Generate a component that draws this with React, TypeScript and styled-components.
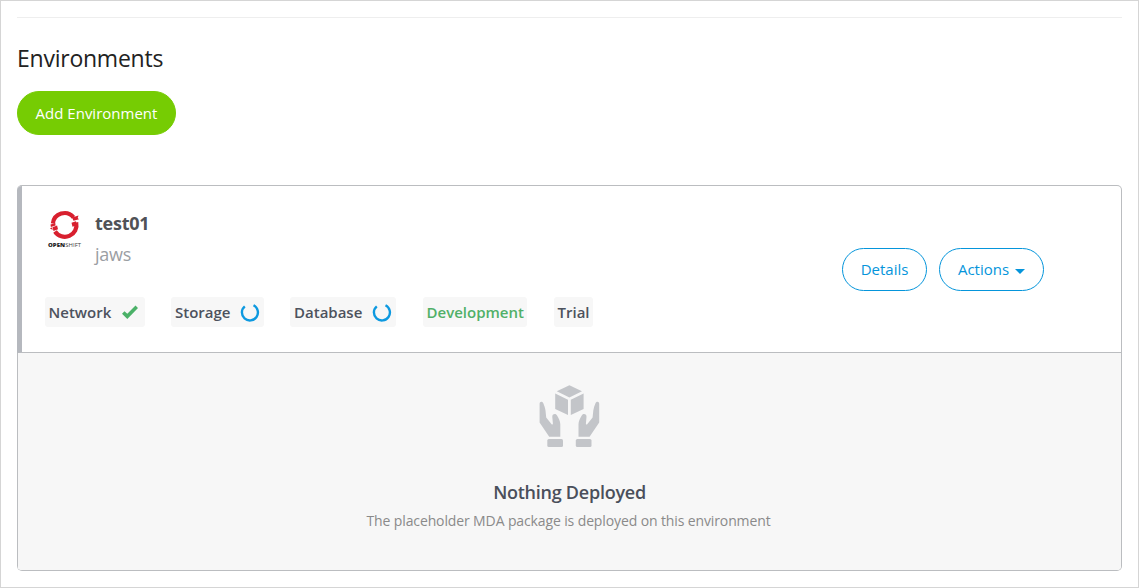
import React from "react";
import styled, { createGlobalStyle } from "styled-components";

const GlobalStyle = createGlobalStyle`
  *, *::before, *::after { box-sizing: border-box; }
  body {
    margin: 0;
    background: #fff;
    color: #555;
    font-family: "Open Sans", "Noto Sans", sans-serif;
    font-size: 15px;
  }
`;

const Page = styled.main`
  height: 588px;
  padding: 16px 16px 0;
  border: 1px solid #d5d5d5;
`;

const Rule = styled.hr`
  height: 1px;
  margin: 0;
  border: 0;
  background: #eee;
`;

const Heading = styled.h1`
  margin: 24px 0 17px;
  font-size: 23px;
  line-height: 32px;
  letter-spacing: -0.24px;
  font-weight: 400;
  color: #222;
`;

const Button = styled.button<{ $primary?: boolean; $width: number }>`
  display: flex;
  align-items: center;
  justify-content: center;
  width: ${(p) => p.$width}px;
  height: ${(p) => (p.$primary ? 44 : 43)}px;
  padding: 0 0 ${(p) => (p.$primary ? 0 : 1)}px;
  border: 1px solid ${(p) => (p.$primary ? "#76cc03" : "#0595db")};
  border-radius: 22px;
  background: ${(p) => (p.$primary ? "#76cc03" : "#fff")};
  color: ${(p) => (p.$primary ? "#fff" : "#0595db")};
  font: 400 15px/20px "Open Sans", sans-serif;
  white-space: nowrap;
`;

const Caret = styled.span`
  margin: 4px 0 0 6px;
  border: 5px solid transparent;
  border-top-color: currentColor;
  border-bottom: 0;
`;

const Card = styled.section`
  display: flex;
  flex-direction: column;
  height: 386px;
  margin-top: 50px;
  border: 1px solid #bbbdc0;
  border-left: 0;
  border-radius: 5px;
  overflow: hidden;
`;

const Summary = styled.div`
  display: flex;
  justify-content: space-between;
  height: 167px;
  border-left: 5px solid #b5b8be;
  border-bottom: 1px solid #bbbdc0;
`;

const Info = styled.div`
  padding: 23px 0 0 23px;
`;

const Identity = styled.div`
  display: flex;
  gap: 13px;
  padding-left: 2px;

  svg { margin-top: 1px; }
`;

const Name = styled.div`
  font-size: 18px;
  line-height: 28px;
  letter-spacing: -0.25px;
  font-weight: 700;
  color: #505257;
`;

const Owner = styled.div`
  margin-top: 3px;
  font-size: 18px;
  line-height: 28px;
  letter-spacing: -0.25px;
  color: #9b9ea3;
`;

const Tags = styled.div`
  display: flex;
  margin-top: 29px;
`;

const Tag = styled.span<{ $width: number; $gap?: number; $indent?: number; $green?: boolean }>`
  display: flex;
  align-items: center;
  width: ${(p) => p.$width}px;
  height: 30px;
  margin-right: ${(p) => p.$gap ?? 26}px;
  padding-left: ${(p) => p.$indent ?? 3.5}px;
  border-radius: 3px;
  background: #f7f7f7;
  color: ${(p) => (p.$green ? "#50b068" : "#4d525d")};
  font-size: 15px;
  line-height: 20px;
  font-weight: 600;
  white-space: nowrap;

  svg { margin-left: 9.5px; flex: none; }
`;

const Actions = styled.div`
  display: flex;
  gap: 12px;
  padding: 62px 77px 0 0;
`;

const Empty = styled.div`
  flex: 1;
  display: flex;
  flex-direction: column;
  align-items: center;
  padding: 32px 0 0;
  border-left: 1px solid #bbbdc0;
  background: #f7f7f7;
`;

const EmptyTitle = styled.h2`
  margin: 31px 0 0;
  font-size: 18px;
  line-height: 28px;
  letter-spacing: -0.25px;
  font-weight: 600;
  color: #4a4f5b;
`;

const EmptyText = styled.p`
  margin: 5px 2px 0 0;
  font-size: 14px;
  line-height: 20px;
  letter-spacing: -0.12px;
  color: #8a8a8a;
`;

const OpenShiftLogo = () => (
  <svg width="35" height="40" viewBox="0 0 35 40">
    <g fill="none" stroke="#d8202f" strokeWidth="4.200">
      <path d="M5.900 13.500A11.700 11.700 0 0 1 26.500 7.300" />
      <path d="M29.200 12.500A11.700 11.700 0 0 1 8 21.500" />
    </g>
    <path fill="#d8202f" d="M25 7.500l6.500-2-.8 2.400 1.300 1.300-5.500 1.600zM24.500 12.800l4.500-1.600 1 4-4.500 1.500zM3.500 14.500l4.700-1.500.4 2.600-4.700 1.500zM5.500 17.200l4.600-1.600.9 3.700-4.500 1.600zM2.800 18.200l2.200-.7.700 2.500z" />
    <text x="1" y="37" fontSize="5.500" fontFamily="Open Sans, sans-serif" fontWeight="800" fill="#222" textLength="17" lengthAdjust="spacingAndGlyphs">OPEN</text>
    <text x="18.300" y="37" fontSize="5.500" fontFamily="Open Sans, sans-serif" fill="#444" textLength="15.700" lengthAdjust="spacingAndGlyphs">SHIFT</text>
  </svg>
);

const Check = () => (
  <svg width="18" height="16" viewBox="0 0 18 16">
    <path d="M1 9.800L3.500 7.200 6.300 9.800 14.500 1.500 17 3.900 6.300 15z" fill="#4bb168" />
  </svg>
);

const Spinner = () => (
  <svg width="20" height="20" viewBox="0 0 20 20">
    <path d="M4.800 4.300A8 8 0 1 0 13.500 3.300" fill="none" stroke="#0d99e0" strokeWidth="2.400" />
  </svg>
);

const handPath =
  "M.6 18.800C.6 16.300 3.200 16 4.200 18 5.300 20.500 6.200 23 6.500 25.500L7.200 32.500 12.400 39c.7.9 1.600.5 1.500-.4L13.300 32c-.5-3 3.200-4.200 4.600-1.800 1.800 3 3.400 5.800 3.400 9V51.800H10.200L.6 37.500z";

const HandsWithBox = () => (
  <svg width="62" height="62" viewBox="0 0 62 62" fill="#c3c5c9">
    <path d="M30.400 .2l12.600 6-12.600 6.200-12.600-6.200z" />
    <path d="M16.200 8.500l12.800 6.300V30L16.200 24zM44.600 8.500l-12.800 6.300V30l12.800-6z" />
    <path d={handPath} />
    <path d={handPath} transform="translate(60.800 0) scale(-1 1)" />
    <rect x="8.300" y="54" width="15.700" height="8" rx="1.500" />
    <rect x="36.800" y="54" width="15.700" height="8" rx="1.500" />
  </svg>
);

export default function App() {
  return (
    <>
      <GlobalStyle />
      <Page>
        <Rule />
        <Heading>Environments</Heading>
        <Button $primary $width={159}>Add Environment</Button>
        <Card>
          <Summary>
            <Info>
              <Identity>
                <OpenShiftLogo />
                <div>
                  <Name>test01</Name>
                  <Owner>jaws</Owner>
                </div>
              </Identity>
              <Tags>
                <Tag $width={100}>Network<Check /></Tag>
                <Tag $width={93} $indent={4}>Storage<Spinner /></Tag>
                <Tag $width={106} $gap={27} $indent={4}>Database<Spinner /></Tag>
                <Tag $width={104} $gap={27} $green>Development</Tag>
                <Tag $width={39}>Trial</Tag>
              </Tags>
            </Info>
            <Actions>
              <Button $width={85}>Details</Button>
              <Button $width={105}>Actions<Caret /></Button>
            </Actions>
          </Summary>
          <Empty>
            <HandsWithBox />
            <EmptyTitle>Nothing Deployed</EmptyTitle>
            <EmptyText>The placeholder MDA package is deployed on this environment</EmptyText>
          </Empty>
        </Card>
      </Page>
    </>
  );
}
